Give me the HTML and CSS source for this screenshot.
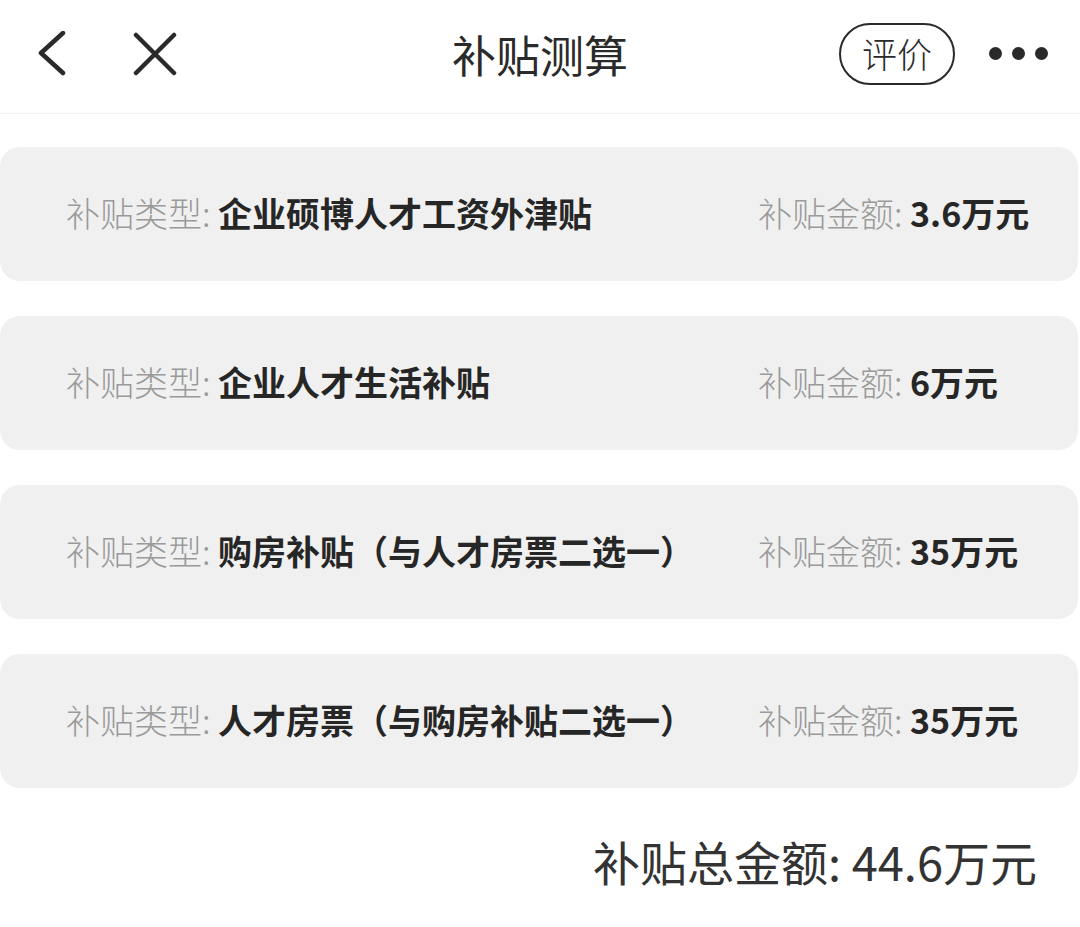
FILE: index.html
```html
<!DOCTYPE html>
<html lang="zh-CN">
<head>
  <meta charset="UTF-8">
  <title>补贴测算</title>
  <link rel="stylesheet" href="styles.css">
</head>
<body>

  <header class="topbar">
    <div class="nav-left">
      <svg class="icon back" width="30" height="46" viewBox="0 0 30 46">
        <path d="M25 2 L3 22 L25 42" fill="none" stroke="#2a2a2a" stroke-width="4.5" stroke-linecap="round" stroke-linejoin="round"/>
      </svg>
      <svg class="icon close" width="44" height="44" viewBox="0 0 44 44">
        <path d="M3 3 L41 41 M41 3 L3 41" fill="none" stroke="#2a2a2a" stroke-width="4.5" stroke-linecap="round"/>
      </svg>
    </div>
    <h1 class="title">补贴测算</h1>
    <div class="nav-right">
      <span class="rate">评价</span>
      <span class="more"><i></i><i></i><i></i></span>
    </div>
  </header>

  <main class="list">
    <div class="card">
      <div class="cell"><span class="label">补贴类型: </span><span class="value">企业硕博人才工资外津贴</span></div>
      <div class="cell"><span class="label">补贴金额: </span><span class="value">3.6万元</span></div>
    </div>
    <div class="card">
      <div class="cell"><span class="label">补贴类型: </span><span class="value">企业人才生活补贴</span></div>
      <div class="cell"><span class="label">补贴金额: </span><span class="value">6万元</span></div>
    </div>
    <div class="card">
      <div class="cell"><span class="label">补贴类型: </span><span class="value">购房补贴（与人才房票二选一）</span></div>
      <div class="cell"><span class="label">补贴金额: </span><span class="value">35万元</span></div>
    </div>
    <div class="card">
      <div class="cell"><span class="label">补贴类型: </span><span class="value">人才房票（与购房补贴二选一）</span></div>
      <div class="cell"><span class="label">补贴金额: </span><span class="value">35万元</span></div>
    </div>
  </main>

  <footer class="total">补贴总金额: 44.6万元</footer>

</body>
</html>
```

FILE: styles.css
```css
* {
  box-sizing: border-box;
}

body {
  margin: 0;
  background: #fff;
  color: #222;
  font-family: "Noto Sans CJK SC", "Noto Sans", sans-serif;
}

.topbar {
  height: 114px;
  display: flex;
  align-items: center;
  justify-content: space-between;
  padding: 0 32px 6px 38px;
  border-bottom: 1px solid #f2f2f2;
  position: relative;
}

.nav-left {
  display: flex;
  align-items: center;
  gap: 65px;
}

.icon {
  display: block;
}

.title {
  position: absolute;
  left: 0;
  right: 0;
  top: 22px;
  margin: 0;
  text-align: center;
  font-size: 44px;
  font-weight: 400;
  color: #2a2a2a;
  pointer-events: none;
}

.nav-right {
  display: flex;
  align-items: center;
  gap: 34px;
}

.rate {
  display: inline-block;
  width: 116px;
  height: 62px;
  line-height: 56px;
  border: 2.5px solid #2a2a2a;
  border-radius: 31px;
  text-align: center;
  font-size: 35px;
  font-weight: 300;
  color: #2a2a2a;
}

.more {
  display: flex;
  gap: 10px;
}

.more i {
  width: 13px;
  height: 13px;
  border-radius: 50%;
  background: #2a2a2a;
}

.list {
  display: flex;
  flex-direction: column;
  gap: 35px;
  padding-top: 33px;
}

.card {
  height: 134px;
  margin-right: 2px;
  background: #f0f0f0;
  border-radius: 20px;
  display: grid;
  grid-template-columns: 692px 1fr;
  align-items: center;
  padding: 0 0 4px 66px;
  font-size: 34px;
}

.label {
  color: #9a9a9a;
  font-weight: 300;
}

.value {
  color: #262626;
  font-weight: 700;
}

.total {
  text-align: right;
  padding: 38px 43px 0 0;
  font-size: 47px;
  color: #333;
}
```
